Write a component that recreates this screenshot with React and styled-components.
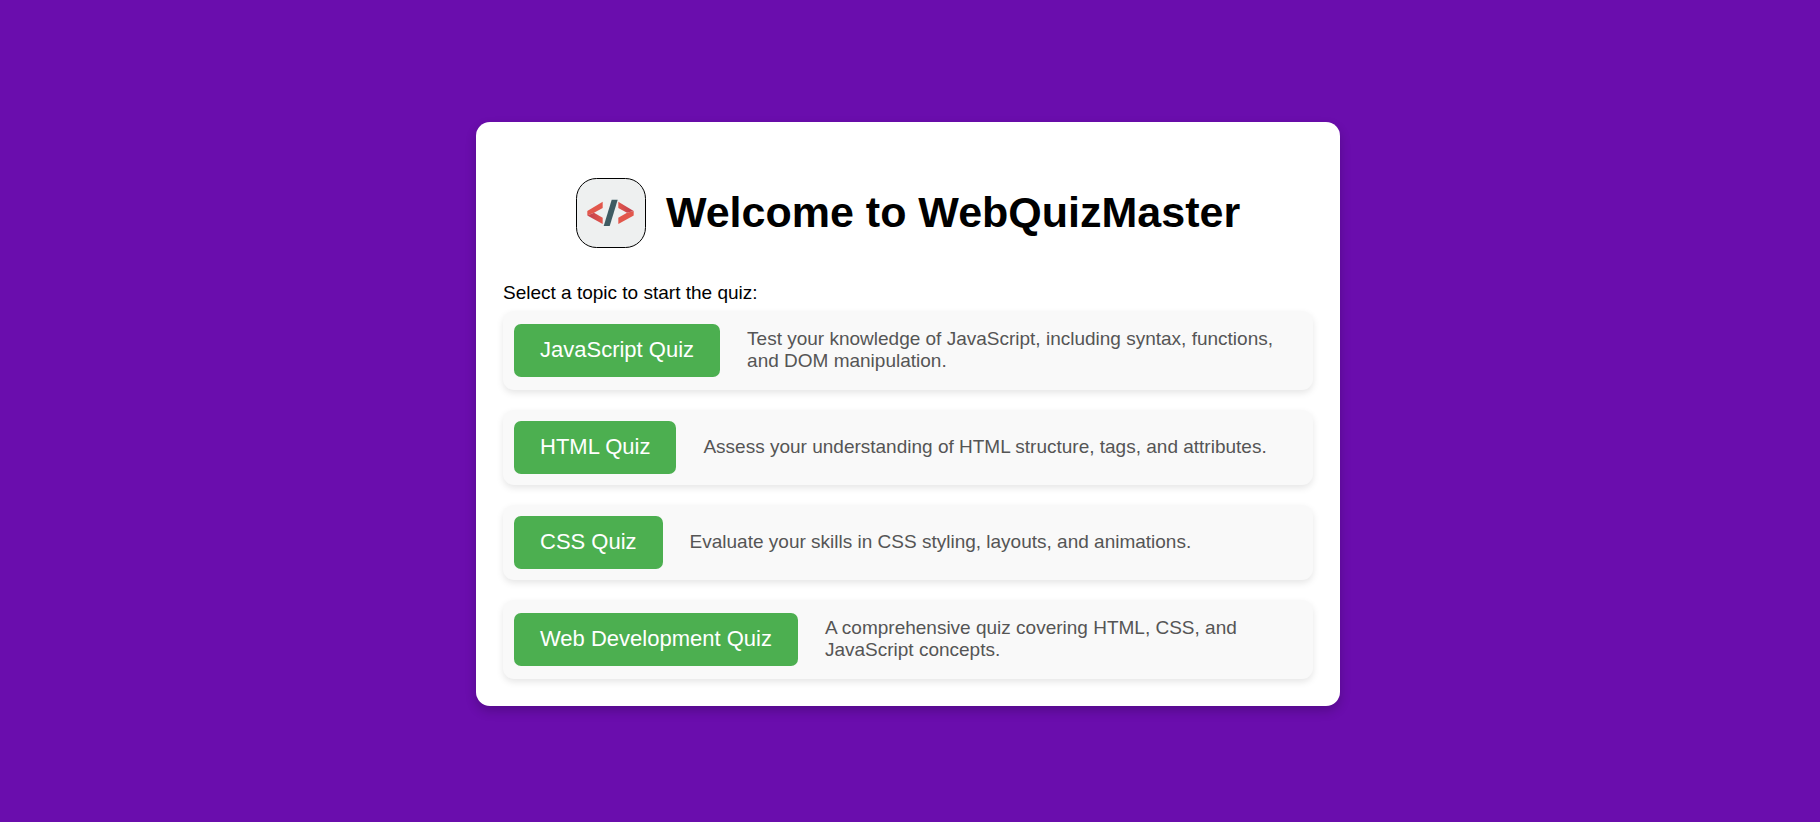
import React from "react";
import styled, { createGlobalStyle } from "styled-components";

const GlobalStyle = createGlobalStyle`
  *, *::before, *::after { box-sizing: border-box; }
  body {
    margin: 0;
    background: #6a0dad;
    color: #000;
    font-family: "Liberation Sans", Arial, sans-serif;
    font-size: 19px;
    line-height: 22px;
  }
`;

const Page = styled.main`
  min-height: 100vh;
  display: flex;
  align-items: center;
  justify-content: center;
  padding: 6px 4px 0 0;
`;

const Card = styled.section`
  width: 100%;
  max-width: 864px;
  padding: 27px;
  border-radius: 14px;
  background: #fff;
  box-shadow: 0 5px 11px rgba(0, 0, 0, 0.2);
`;

const Header = styled.header`
  display: flex;
  align-items: center;
  justify-content: center;
  gap: 20px;
  padding: 29px 0 34px;
`;

const Logo = styled.svg`
  flex: none;
  width: 70px;
  height: 70px;
`;

const Title = styled.h1`
  margin: 0;
  padding-bottom: 2px;
  font-size: 43px;
  line-height: 50px;
  font-weight: 700;
`;

const Prompt = styled.p`
  margin: 0 0 7px;
`;

const TopicList = styled.ul`
  list-style: none;
  margin: 0;
  padding: 0;
  display: flex;
  flex-direction: column;
  gap: 20px;
`;

const TopicRow = styled.li`
  display: flex;
  align-items: center;
  gap: 27px;
  padding: 11px;
  border-radius: 11px;
  background: #f9f9f9;
  box-shadow: 0 3px 7px rgba(0, 0, 0, 0.1);
`;

const TopicButton = styled.button`
  flex: none;
  padding: 13px 26px 15px;
  border: 0;
  border-radius: 7px;
  background: #4caf50;
  color: #fff;
  font: inherit;
  font-size: 22px;
  line-height: 25px;
  cursor: pointer;
`;

const Description = styled.p`
  flex: 1;
  margin: 0;
  padding: 6px 0 7px;
  color: #555;
`;

const topics = [
  ["JavaScript Quiz", "Test your knowledge of JavaScript, including syntax, functions, and DOM manipulation."],
  ["HTML Quiz", "Assess your understanding of HTML structure, tags, and attributes."],
  ["CSS Quiz", "Evaluate your skills in CSS styling, layouts, and animations."],
  ["Web Development Quiz", "A comprehensive quiz covering HTML, CSS, and JavaScript concepts."],
];

export default function App() {
  return (
    <>
      <GlobalStyle />
      <Page>
        <Card>
          <Header>
            <Logo viewBox="0 0 70 70" aria-hidden="true">
              <defs>
                <linearGradient id="foldLeft" x1="0" x2="1">
                  <stop offset="0.3" stopColor="#c9454d" />
                  <stop offset="1" stopColor="#e2574c" />
                </linearGradient>
                <linearGradient id="foldRight" x1="0" x2="1">
                  <stop offset="0" stopColor="#e2574c" />
                  <stop offset="0.7" stopColor="#c9454d" />
                </linearGradient>
              </defs>
              <rect x="0.5" y="0.5" width="69" height="69" rx="20" fill="#eef0f0" stroke="#000" />
              <path d="M11.3 33 26.7 23.7V30L18 34.7 11.3 37.5Z" fill="#e2574c" />
              <path d="M11.3 37.5 18 34.7 26.7 39.7V46Z" fill="url(#foldLeft)" />
              <path d="M57.7 37.5 42.3 46V39.7L51 34.7 57.7 33Z" fill="#e2574c" />
              <path d="M57.7 33 42.3 23.7V30L51 34.7Z" fill="url(#foldRight)" />
              <path d="M35.7 21.7H41.7L33.7 48H27.7Z" fill="#3f5c63" />
            </Logo>
            <Title>Welcome to WebQuizMaster</Title>
          </Header>
          <Prompt>Select a topic to start the quiz:</Prompt>
          <TopicList>
            {topics.map(([name, description]) => (
              <TopicRow key={name}>
                <TopicButton type="button">{name}</TopicButton>
                <Description>{description}</Description>
              </TopicRow>
            ))}
          </TopicList>
        </Card>
      </Page>
    </>
  );
}
